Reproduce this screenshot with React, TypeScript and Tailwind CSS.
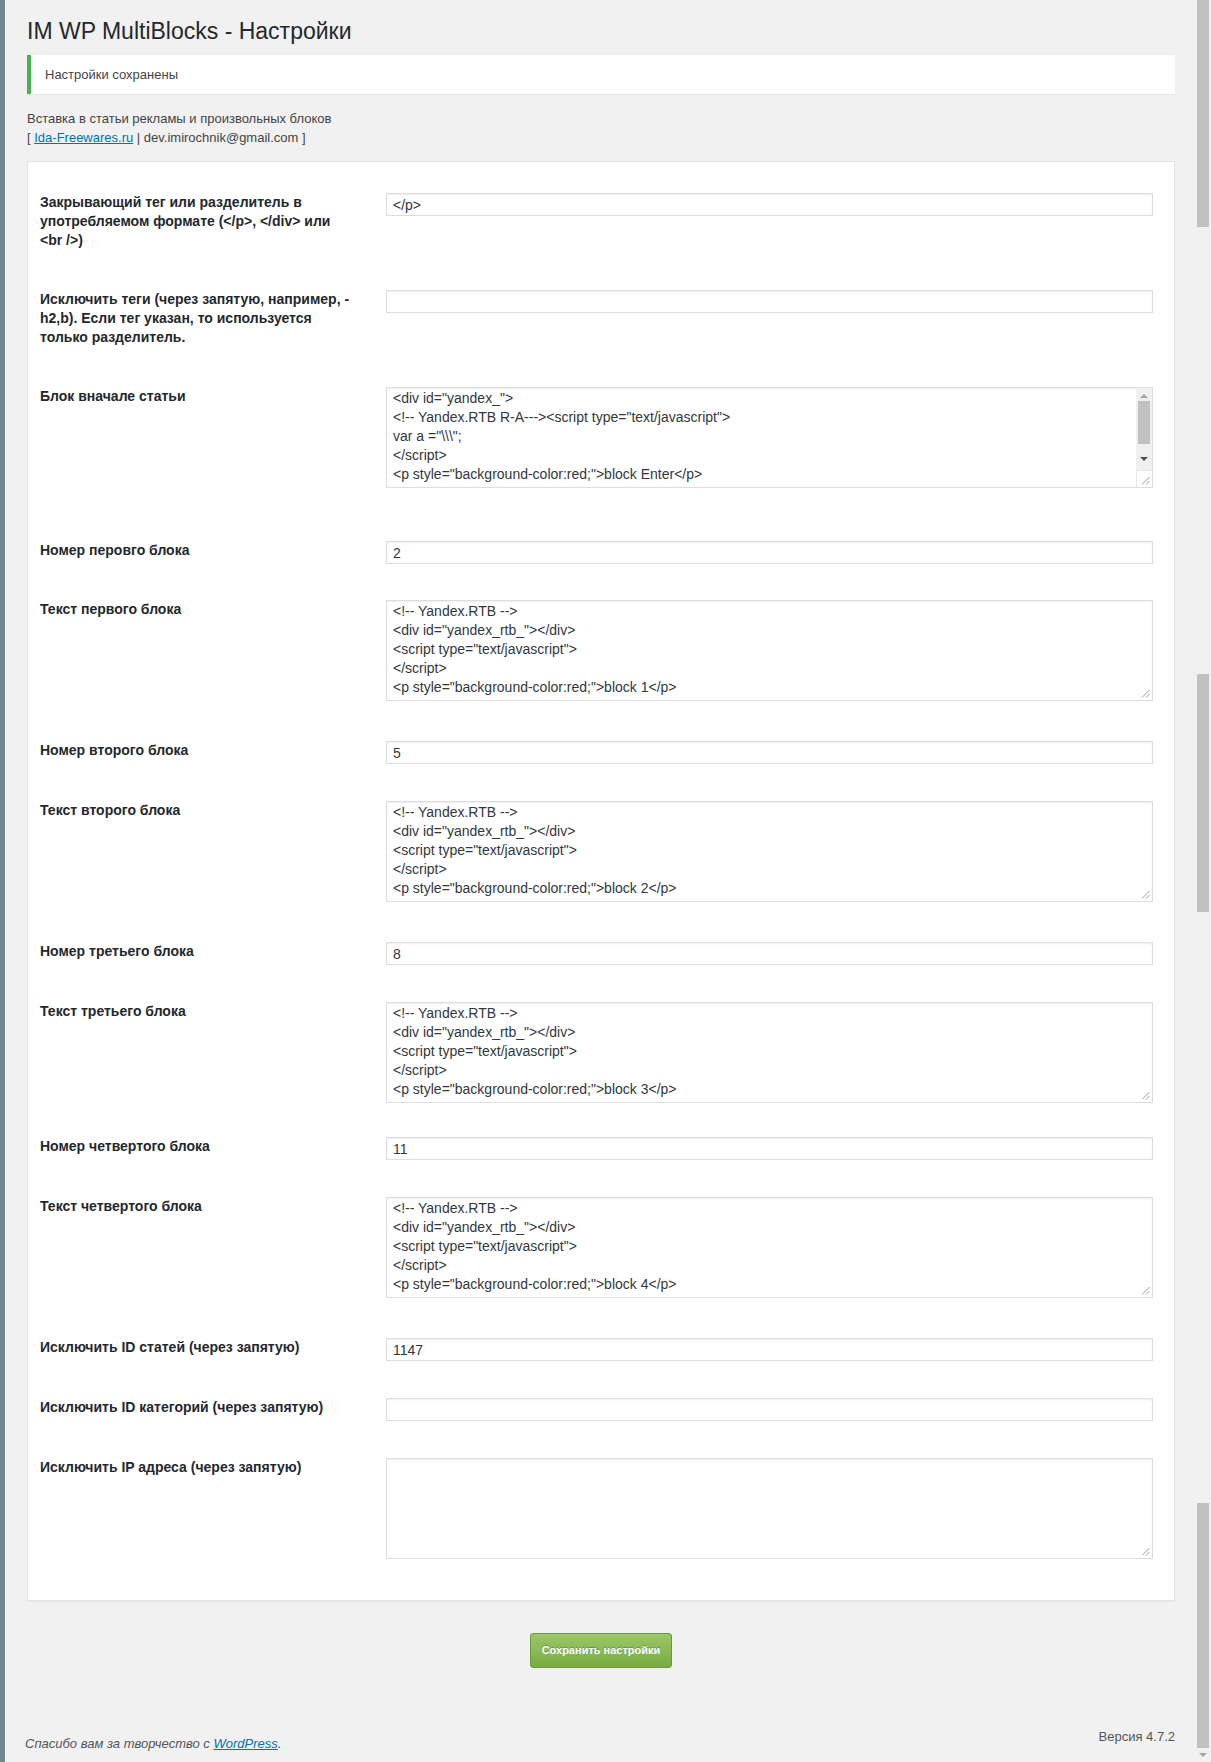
import React from 'react';

// --- Field definitions for the settings form ---
type Field = {
  label: string;
  kind: 'input' | 'textarea';
  value: string;
  scroll?: boolean; // first textarea shows a scrollbar
  pb?: string; // extra row bottom spacing class
  fpb?: string; // field bottom spacing override
};

const yandexBlock = (n: string) =>
  `<!-- Yandex.RTB -->\n<div id="yandex_rtb_"></div>\n<script type="text/javascript">\n</script>\n<p style="background-color:red;">block ${n}</p>`;

const fields: Field[] = [
  { label: 'Закрывающий тег или разделитель в употребляемом формате (</p>, </div> или <br />)', kind: 'input', value: '</p>' },
  { label: 'Исключить теги (через запятую, например, -h2,b). Если тег указан, то используется только разделитель.', kind: 'input', value: '' },
  {
    label: 'Блок вначале статьи',
    kind: 'textarea',
    scroll: true,
    pb: 'pb-[13px]',
    value: '<div id="yandex_">\n<!-- Yandex.RTB R-A---><script type="text/javascript">\nvar a ="\\\\\\";\n</script>\n<p style="background-color:red;">block Enter</p>',
  },
  { label: 'Номер перовго блока', kind: 'input', value: '2', fpb: 'pb-[36px]' },
  { label: 'Текст первого блока', kind: 'textarea', value: yandexBlock('1') },
  { label: 'Номер второго блока', kind: 'input', value: '5' },
  { label: 'Текст второго блока', kind: 'textarea', value: yandexBlock('2') },
  { label: 'Номер третьего блока', kind: 'input', value: '8' },
  { label: 'Текст третьего блока', kind: 'textarea', value: yandexBlock('3'), fpb: 'pb-[34px]' },
  { label: 'Номер четвертого блока', kind: 'input', value: '11' },
  { label: 'Текст четвертого блока', kind: 'textarea', value: yandexBlock('4') },
  { label: 'Исключить ID статей (через запятую)', kind: 'input', value: '1147' },
  { label: 'Исключить ID категорий (через запятую)', kind: 'input', value: '' },
  { label: 'Исключить IP адреса (через запятую)', kind: 'textarea', value: '' },
];

// Little diagonal resize grip in the textarea corner
const Grip = () => (
  <svg width="9" height="9" viewBox="0 0 9 9" className="absolute right-[2px] bottom-[2px]">
    <line x1="8.5" y1="1" x2="1" y2="8.5" stroke="#9a9a9a" strokeWidth="1" />
    <line x1="8.5" y1="5" x2="5" y2="8.5" stroke="#9a9a9a" strokeWidth="1" />
  </svg>
);

const TextBox = ({ value, scroll }: { value: string; scroll?: boolean }) => (
  <div className="relative flex h-[101px] border border-[#dddddd] bg-white shadow-[inset_0_1px_2px_rgba(0,0,0,0.07)]">
    <textarea
      readOnly
      value={value}
      className="h-full flex-1 resize-none overflow-hidden bg-transparent px-[6px] pt-[1px] text-[14px] leading-[19px] text-[#32373c] outline-none"
    />
    {scroll ? (
      // classic scrollbar on the first textarea
      <div className="flex w-[16px] flex-col items-center bg-[#f0f0f0]">
        <div className="mt-[6px] h-0 w-0 border-x-[4px] border-b-[4px] border-x-transparent border-b-[#a3a3a3]" />
        <div className="mt-[3px] h-[43px] w-[12px] bg-[#c1c1c1]" />
        <div className="mt-[13px] h-0 w-0 border-x-[4px] border-t-[4px] border-x-transparent border-t-[#505050]" />
        <div className="relative mt-auto h-[17px] w-[16px] border-l border-t border-[#e6e6e6] bg-white">
          <Grip />
        </div>
      </div>
    ) : (
      <Grip />
    )}
  </div>
);

const SettingsRow = ({ field }: { field: Field }) => (
  <div className={`flex items-start ${field.pb ?? ''}`}>
    <div className="w-[346px] shrink-0 pr-[32px] pb-[40px] text-[14px] font-bold leading-[19px] text-[#23282d]">
      {field.label}
    </div>
    <div className={`flex-1 ${field.fpb ?? (field.kind === 'input' ? 'pb-[37px]' : 'pb-[40px]')}`}>
      {field.kind === 'input' ? (
        <input
          readOnly
          value={field.value}
          className="block h-[23px] w-full border border-[#dddddd] bg-white px-[6px] text-[14px] text-[#32373c] shadow-[inset_0_1px_2px_rgba(0,0,0,0.07)] outline-none"
        />
      ) : (
        <TextBox value={field.value} scroll={field.scroll} />
      )}
    </div>
  </div>
);

export default function App() {
  return (
    <div className="flex min-h-screen bg-[#f1f1f1] font-['Liberation_Sans',Arial,sans-serif] text-[13px] text-[#444]">
      {/* admin menu edge */}
      <div className="w-[5px] shrink-0 bg-[#6f8793]" />

      <div className="flex min-w-0 flex-1 flex-col px-[22px]">
        <h1 className="pt-[17px] text-[23px] leading-[29px] text-[#23282d]">IM WP MultiBlocks - Настройки</h1>

        {/* saved notice */}
        <div className="mt-[9px] border-l-4 border-[#46b450] bg-white py-[10px] pl-[14px] leading-[19px] text-[#444] shadow-[0_1px_1px_rgba(0,0,0,0.04)]">
          Настройки сохранены
        </div>

        <div className="mt-[15px] leading-[19px] text-[#444]">
          <p>Вставка в статьи рекламы и произвольных блоков</p>
          <p>
            [ <a href="#" className="text-[#0073aa] underline">Ida-Freewares.ru</a> | dev.imirochnik@gmail.com ]
          </p>
        </div>

        {/* settings card */}
        <div className="mt-[14px] border border-[#e5e5e5] bg-white pt-[31px] pb-[1px] pl-[12px] pr-[21px] shadow-[0_1px_1px_rgba(0,0,0,0.04)]">
          {fields.map((f, i) => (
            <SettingsRow key={i} field={f} />
          ))}
        </div>

        <div className="mt-[32px] flex justify-center">
          <button className="h-[35px] w-[142px] whitespace-nowrap rounded-[3px] border border-[#6b9a3b] bg-linear-to-b from-[#9dc76a] to-[#78ab40] px-0 text-[11px] font-bold text-white [text-shadow:0_-1px_0_rgba(0,0,0,0.25)]">
            Сохранить настройки
          </button>
        </div>

        {/* footer */}
        <div className="mt-[59px] flex items-end justify-between pb-[8px]">
          <p className="-ml-[2px] italic leading-[19px] text-[#555]">
            Спасибо вам за творчество с <a href="#" className="text-[#0073aa] underline">WordPress</a>.
          </p>
          <p className="mb-[7px] leading-[19px] text-[#555]">Версия 4.7.2</p>
        </div>
      </div>

      {/* window scrollbar column */}
      <div className="flex w-[14px] shrink-0 flex-col">
        <div className="h-[227px] w-[12px] bg-[#c1c1c1]" />
        <div className="mt-[447px] h-[238px] w-[12px] bg-[#c1c1c1]" />
        <div className="mt-[591px] h-[245px] w-[12px] bg-[#c1c1c1]" />
        <div className="mt-[5px] ml-[2px] h-0 w-0 border-x-[4px] border-t-[4px] border-x-transparent border-t-[#a3a3a3]" />
      </div>
    </div>
  );
}
